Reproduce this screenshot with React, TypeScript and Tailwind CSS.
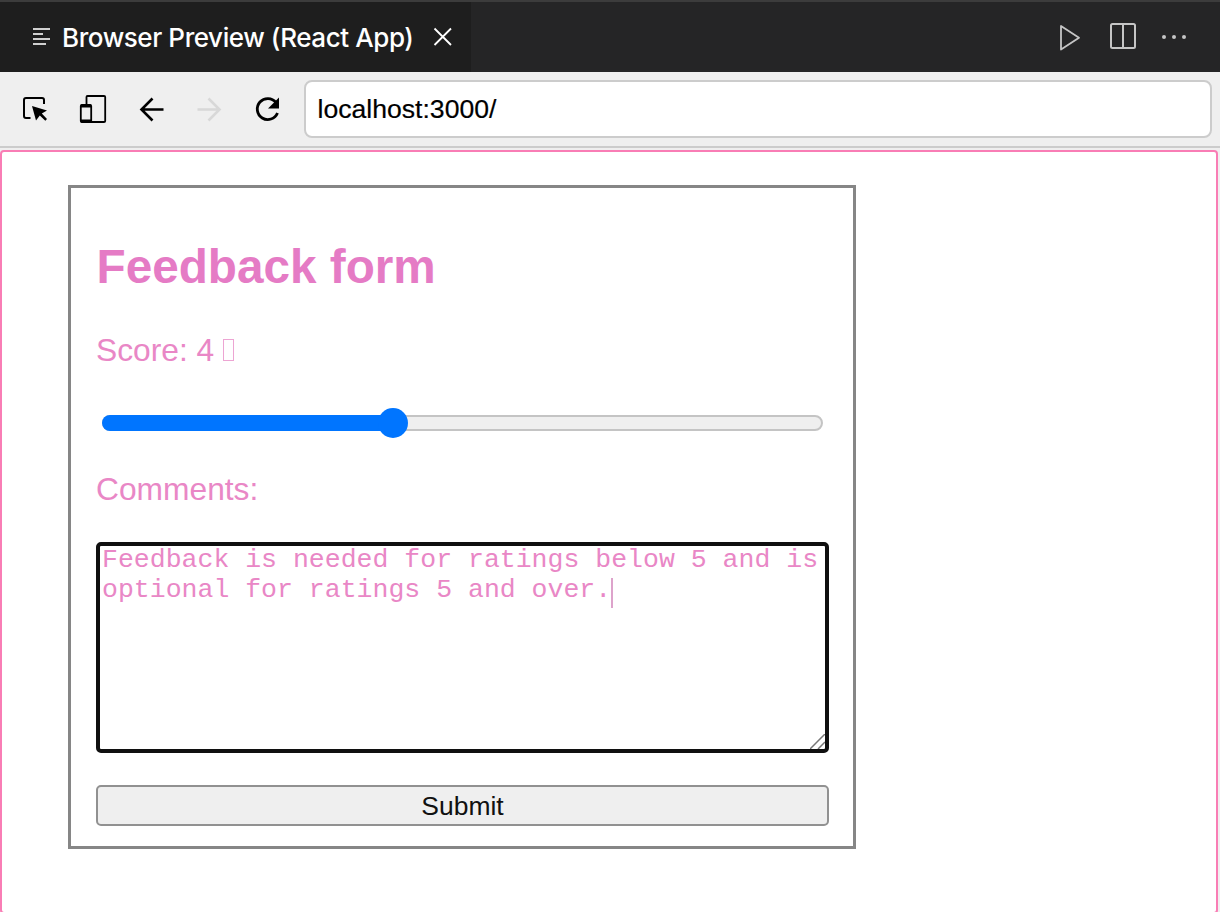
import React from "react";

function TabBar() {
  return (
    <div className="flex h-[72px] border-t-2 border-[#3c3c3c] bg-[#252526]">
      <div className="flex w-[471px] items-center bg-[#1e1e1e] pl-8">
        <svg className="h-[20px] w-[18px] shrink-0" viewBox="0 0 18 20" fill="#d0d0d0">
          <rect x="1" y="1" width="17" height="2" />
          <rect x="1" y="6" width="10" height="2" />
          <rect x="1" y="11" width="17" height="2" />
          <rect x="1" y="16" width="13" height="2" />
        </svg>
        <span className="ml-[12px] mt-[2px] w-[351px] whitespace-nowrap font-['Inter',sans-serif] text-[26px] font-medium leading-[32px] tracking-[-0.42px] text-white">
          Browser Preview (React App)
        </span>
        <svg className="ml-[20px] h-[20px] w-[20px] shrink-0" viewBox="0 0 20 20" stroke="#fff" strokeWidth="1.8" fill="none">
          <path d="M1.500 1.500 18 18M18 1.500 1.500 18" />
        </svg>
      </div>
      <div className="flex flex-1 justify-end pr-8 pt-[20px]">
        <svg className="h-[30px] w-[24px]" viewBox="0 0 24 30" stroke="#c5c5c5" strokeWidth="1.8" fill="none" strokeLinejoin="round">
          <path d="M4 4V27.500L22 15.800Z" />
        </svg>
        <svg className="ml-[28px] h-[30px] w-[28px]" viewBox="0 0 28 30" stroke="#c5c5c5" strokeWidth="2" fill="none">
          <rect x="2" y="2" width="24" height="24" rx="1.5" />
          <path d="M14 2V26" />
        </svg>
        <svg className="ml-[25px] h-[30px] w-[26px]" viewBox="0 0 26 30" fill="#c5c5c5">
          <circle cx="2" cy="15" r="2" />
          <circle cx="12" cy="15" r="2" />
          <circle cx="22" cy="15" r="2" />
        </svg>
      </div>
    </div>
  );
}

function Toolbar() {
  return (
    <div className="flex h-[76px] items-start border-b-2 border-[#cccccc] bg-[#efefef] pl-[20px] pr-[8px] pt-[8px]">
      <div className="flex h-[58px] items-center">
        <svg className="h-[30px] w-[30px]" viewBox="0 0 30 30" fill="none">
          <path d="M10.500 24H6Q4 24 4 22V6Q4 4 6 4H22Q24 4 24 6V10" stroke="#000" strokeWidth="2" />
          <path d="M12 12 27 16.500 21.800 19.500 27 25 25.300 26.800 19.800 21.500 16 26.500Z" fill="#000" />
        </svg>
        <svg className="ml-[28px] h-[30px] w-[30px]" viewBox="0 0 30 30" fill="none" stroke="#000" strokeWidth="1.8">
          <path d="M8.500 10V3Q8.500 2 9.500 2H26Q27.200 2 27.200 3V27Q27.200 28 26 28H12" />
          <rect x="2.800" y="11" width="10.400" height="17" rx="1" />
          <path d="M3 12H13M3 27H13" strokeWidth="3" />
        </svg>
        <svg className="ml-[28px] h-[30px] w-[30px]" viewBox="0 0 30 30" fill="none" stroke="#000" strokeWidth="2.6">
          <path d="M27.500 15.500H5.500M16.500 4.500 5.500 15.500 16.500 26.500" />
        </svg>
        <svg className="ml-[31px] h-[30px] w-[26px]" viewBox="0 0 26 30" fill="none" stroke="#d8d8d8" strokeWidth="2.6">
          <path d="M0.500 15.500H22.500M11.500 4.500 22.500 15.500 11.500 26.500" />
        </svg>
        <svg className="ml-[30px] h-[30px] w-[30px]" viewBox="0 0 30 30" fill="none">
          <path d="M24.500 19A10.500 10.500 0 1 1 23 8.500" stroke="#000" strokeWidth="2.8" />
          <path d="M26 3.500V14.500H15Z" fill="#000" />
        </svg>
      </div>
      <div className="ml-[21px] flex h-[58px] flex-1 items-center rounded-[8px] border-2 border-[#cccccc] bg-white pl-[11.5px] font-['Liberation_Sans',sans-serif] text-[26.6px] text-black">
        <span className="mt-px [-webkit-text-stroke:0.2px_#000]">localhost:3000/</span>
      </div>
    </div>
  );
}

function ScoreSlider() {
  return (
    <div className="mt-10 flex h-[30px] items-center pl-[6px]">
      <div className="flex h-[16px] w-[721px] items-center rounded-full border-2 border-[#c4c4c4] bg-[#efefef]">
        <div className="-ml-[2px] h-[16px] w-[290px] shrink-0 rounded-l-full bg-[#0075ff]" />
        <div className="-ml-[14px] h-[30px] w-[30px] shrink-0 rounded-full bg-[#0075ff]" />
      </div>
    </div>
  );
}

function FeedbackForm() {
  return (
    <div className="ml-[66px] mt-[33px] flex h-[664px] w-[788px] shrink-0 flex-col border-[3px] border-[#868686] pl-[25px] pt-[52px] font-['Liberation_Sans',sans-serif] text-[31.76px] leading-[36px] text-[#e987c6]">
      <h1 className="pl-[0.5px] text-[47.7px] font-bold leading-[54px] text-[#e57bc5]">Feedback form</h1>
      <div className="mt-[38px] flex h-[36px] items-center">
        <span>Score: 4</span>
        <span className="ml-[9px] h-[22px] w-[11px] border border-[#eda5d3]" />
      </div>
      <ScoreSlider />
      <div className="mt-[33px]">Comments:</div>
      <div className="relative mt-[35px] h-[211px] w-[733px] rounded-[5px] border-4 border-[#101010] pl-[2px] font-['Liberation_Mono',monospace] text-[26.53px] leading-[30px]">
        <div className="-mt-px h-[30px] whitespace-nowrap">Feedback is needed for ratings below 5 and is</div>
        <div className="flex h-[30px] items-center whitespace-nowrap">
          <span>optional for ratings 5 and over.</span>
          <span className="mt-[6px] h-[30px] w-[2px] bg-[#dda3cb]" />
        </div>
        <svg className="absolute bottom-0 right-0 h-[15px] w-[15px]" viewBox="0 0 15 15" stroke="#777" strokeWidth="1.5">
          <path d="M0 15 15 0M8 15 15 8" />
        </svg>
      </div>
      <button className="mt-8 flex h-[41px] w-[733px] items-center justify-center rounded-[5px] border-2 border-[#919191] bg-[#efefef] text-[26.47px] leading-[30px] text-[#111]">
        Submit
      </button>
    </div>
  );
}

export default function App() {
  return (
    <div className="h-[912px] w-[1220px] overflow-hidden bg-[#efefef]">
      <TabBar />
      <Toolbar />
      <div className="mt-[2px] flex h-[764px] w-[1218px] rounded-[4px] border-2 border-[#f97db5] bg-white">
        <FeedbackForm />
      </div>
    </div>
  );
}
